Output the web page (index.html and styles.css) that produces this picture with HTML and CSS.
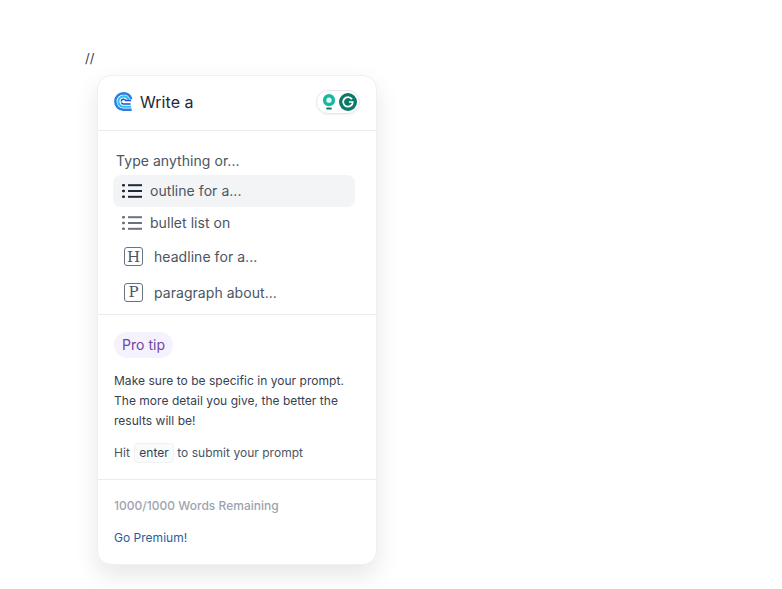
FILE: index.html
```html
<!DOCTYPE html>
<html lang="en">
<head>
    <meta charset="UTF-8">
    <meta name="viewport" content="width=device-width, initial-scale=1.0">
    <title>Write a</title>
    <link rel="stylesheet" href="styles.css">
</head>
<body>
    <div class="editor-line">//</div>

    <div class="prompt-card">
        <div class="card-header">
            <div class="prompt-input">
                <svg class="logo" width="19" height="19" viewBox="0 0 20 20" fill="none">
                    <path d="M18.2 7.6A8.8 8.8 0 0 0 10 1.4 8.6 8.6 0 0 0 1.4 10 8.6 8.6 0 0 0 10 18.6h8.6" stroke="#2a7de1" stroke-width="2.6"/>
                    <path d="M15.4 8.4A5.6 5.6 0 0 0 10 4.6 5.4 5.4 0 0 0 4.6 10a5.4 5.4 0 0 0 5.4 5.6h8" stroke="#2cc0ea" stroke-width="2.2"/>
                    <path d="M7.6 10a2.4 2.4 0 0 1 4.6-1H18M7.8 11a2.4 2.4 0 0 0 2.4 1.6H17.4" stroke="#1d4fd7" stroke-width="1.6"/>
                </svg>
                <span>Write a</span>
            </div>
            <div class="grammarly-pill">
                <svg width="14" height="16" viewBox="0 0 15 17">
                    <circle cx="7.5" cy="6.5" r="6.5" fill="#15b8a0"/>
                    <circle cx="7.5" cy="6.5" r="2.8" fill="#e8fbf7"/>
                    <rect x="4.5" y="14.4" width="6" height="2.2" rx="1" fill="#0e7c6c"/>
                </svg>
                <svg width="18" height="18" viewBox="0 0 18 18">
                    <circle cx="9" cy="9" r="9" fill="#0b7a66"/>
                    <path d="M13 6.2A4.8 4.8 0 1 0 13.8 9H10" fill="none" stroke="#fff" stroke-width="1.7"/>
                </svg>
            </div>
        </div>

        <div class="suggestions">
            <div class="suggestions-title">Type anything or...</div>
            <div class="suggestion active">
                <svg class="list-icon" width="20" height="16" viewBox="0 0 20 16">
                    <g fill="#1f2937">
                        <rect x="0" y="1" width="3" height="2.4" rx="1"/>
                        <rect x="0" y="6.8" width="3" height="2.4" rx="1"/>
                        <rect x="0" y="12.6" width="3" height="2.4" rx="1"/>
                        <rect x="6" y="1.2" width="14" height="2"/>
                        <rect x="6" y="7" width="14" height="2"/>
                        <rect x="6" y="12.8" width="14" height="2"/>
                    </g>
                </svg>
                <span>outline for a...</span>
            </div>
            <div class="suggestion">
                <svg class="list-icon" width="20" height="16" viewBox="0 0 20 16">
                    <g fill="#6b7280">
                        <rect x="0" y="1" width="3" height="2.4" rx="1"/>
                        <rect x="0" y="6.8" width="3" height="2.4" rx="1"/>
                        <rect x="0" y="12.6" width="3" height="2.4" rx="1"/>
                        <rect x="6" y="1.2" width="14" height="2"/>
                        <rect x="6" y="7" width="14" height="2"/>
                        <rect x="6" y="12.8" width="14" height="2"/>
                    </g>
                </svg>
                <span>bullet list on</span>
            </div>
            <div class="suggestion boxed">
                <span class="letter-box">H</span>
                <span>headline for a...</span>
            </div>
            <div class="suggestion boxed">
                <span class="letter-box">P</span>
                <span>paragraph about...</span>
            </div>
        </div>

        <div class="tip-section">
            <span class="tip-badge">Pro tip</span>
            <p class="tip-text">Make sure to be specific in your prompt. The more detail you give, the better the results will be!</p>
            <p class="tip-hit">Hit <span class="key">enter</span> to submit your prompt</p>
        </div>

        <div class="card-footer">
            <div class="words-left">1000/1000 Words Remaining</div>
            <a class="premium-link" href="#">Go Premium!</a>
        </div>
    </div>
</body>
</html>
```

FILE: styles.css
```css
body {
    margin: 0;
    padding: 50px 0 0 85px;
    min-height: 100vh;
    box-sizing: border-box;
    background: #fff;
    font-family: Inter, "Liberation Sans", sans-serif;
    color: #374151;
    letter-spacing: 0.05px;
}
.editor-line {
    height: 25px;
    font-size: 13px;
    line-height: 17px;
    color: #374151;
}
.prompt-card {
    width: 278px;
    height: 488px;
    margin-left: 12px;
    background: #fff;
    border: 1px solid #eef0f2;
    border-radius: 14px;
    box-shadow: 0 10px 25px rgba(0, 0, 0, 0.1);
}
.card-header {
    display: flex;
    align-items: center;
    justify-content: space-between;
    height: 55px;
    padding: 0 16px 3px 16px;
    box-sizing: border-box;
    border-bottom: 1px solid #e9ebee;
}
.prompt-input {
    display: flex;
    align-items: center;
    gap: 7px;
    font-size: 16px;
    color: #1f2937;
}
.grammarly-pill {
    display: flex;
    align-items: center;
    gap: 3px;
    height: 22px;
    padding: 0 2px 0 5px;
    border: 1px solid #e5e7eb;
    border-radius: 12px;
    box-shadow: 0 1px 2px rgba(0, 0, 0, 0.06);
}
.suggestions {
    height: 163px;
    padding: 20px 21px 0 15px;
    border-bottom: 1px solid #e9ebee;
}
.suggestions-title {
    margin: 0 0 4px 3px;
    font-size: 14px;
    line-height: 20px;
    color: #4b5563;
}
.suggestion {
    display: flex;
    align-items: center;
    gap: 8px;
    height: 32px;
    padding-left: 9px;
    font-size: 14px;
    color: #4b5563;
}
.list-icon + span {
    margin-bottom: 2px;
}
.suggestion.active {
    background: #f3f4f6;
    border-radius: 8px;
}
.suggestion.boxed {
    height: 36px;
    padding-left: 11px;
    gap: 11px;
    margin-top: -0.5px;
}
.letter-box {
    display: flex;
    align-items: center;
    justify-content: center;
    width: 17px;
    height: 17px;
    border: 1.5px solid #6b7280;
    border-radius: 3px;
    font-family: "DejaVu Serif", serif;
    font-size: 15px;
    color: #4b5563;
}
.tip-section {
    height: 147px;
    padding: 17px 15px 0 16px;
    border-bottom: 1px solid #e9ebee;
    letter-spacing: 0.03px;
}
.tip-badge {
    display: inline-block;
    padding: 0 8px;
    height: 26px;
    line-height: 26px;
    font-size: 14px;
    color: #6b46a8;
    background: #f6f2fd;
    border-radius: 13px;
}
.tip-text {
    margin: 13px 0 0;
    font-size: 12px;
    line-height: 20px;
    color: #374151;
}
.tip-hit {
    margin: 12px 0 0;
    font-size: 12px;
    line-height: 20px;
    color: #4b5563;
}
.key {
    display: inline-block;
    padding: 0 4px;
    margin: 0 0 0 1px;
    line-height: 18px;
    background: #fafbfb;
    border: 1px solid #f0f1f3;
    border-radius: 4px;
    color: #374151;
}
.card-footer {
    padding: 18px 16px 0;
    letter-spacing: 0.02px;
}
.words-left {
    font-size: 12px;
    line-height: 16px;
    font-weight: 500;
    color: #9ca3af;
}
.premium-link {
    display: block;
    margin-top: 16px;
    font-size: 12px;
    line-height: 16px;
    color: #2b5c9e;
    text-decoration: none;
}
```
